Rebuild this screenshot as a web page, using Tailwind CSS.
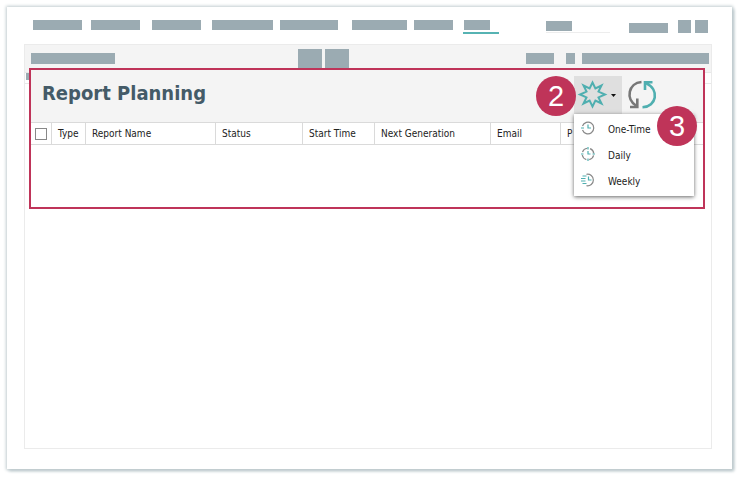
<!DOCTYPE html>
<html lang="en">
<head>
<meta charset="utf-8">
<title>Report Planning</title>
<script src="https://cdn.jsdelivr.net/npm/@tailwindcss/browser@4"></script>
</head>
<body class="bg-white font-['DejaVu_Sans_Condensed','DejaVu_Sans',sans-serif] text-[10px] text-[#222]">
<div class="flex h-screen min-h-[300px] pt-[7px] pr-[10px] pb-[10px] pl-[7px]">
  <div class="flex grow flex-col bg-white pr-5 pb-5 pl-[17px] shadow-[0_0_3px_1px_#c3ced1,2px_2px_3px_#b5c3c7]">
    <!-- Navigation placeholders -->
    <nav class="flex h-[37px] items-start pt-[13px] pr-1 pl-[9px]">
      <div class="flex">
        <span class="h-[10px] w-[49px] bg-[#9babb2]"></span>
        <span class="ml-[9px] h-[10px] w-[49px] bg-[#9babb2]"></span>
        <span class="ml-3 h-[10px] w-[49px] bg-[#9babb2]"></span>
        <span class="ml-[11px] h-[10px] w-[61px] bg-[#9babb2]"></span>
        <span class="ml-[7px] h-[10px] w-[58px] bg-[#9babb2]"></span>
        <span class="ml-[14px] h-[10px] w-[55px] bg-[#9babb2]"></span>
        <span class="ml-[7px] h-[10px] w-[39px] bg-[#9babb2]"></span>
        <span class="ml-[10px] flex h-[14px] w-9 border-b-2 border-[#56b3b3]"><span class="ml-px h-[10px] w-[26px] bg-[#9babb2]"></span></span>
      </div>
      <div class="ml-auto flex items-end">
        <span class="flex h-3 w-16 border-b border-[#ededed]"><span class="h-[10px] w-[26px] bg-[#9babb2]"></span></span>
        <span class="ml-[19px] h-[10px] w-[39px] bg-[#9babb2]"></span>
        <span class="ml-[10px] h-[13px] w-[13px] bg-[#9babb2]"></span>
        <span class="ml-1 h-[13px] w-[13px] bg-[#9babb2]"></span>
      </div>
    </nav>
    <div class="grow border border-[#ebebeb]">
      <!-- Toolbar placeholders -->
      <div class="flex h-[23px] items-end bg-[#f4f4f4] pr-[2px] pl-[6px]">
        <span class="mb-1 h-[11px] w-[84px] bg-[#9babb2]"></span>
        <span class="ml-[183px] h-[19px] w-6 bg-[#9babb2]"></span>
        <span class="ml-[3px] h-[19px] w-6 bg-[#9babb2]"></span>
        <div class="mb-1 ml-auto flex">
          <span class="h-[11px] w-7 bg-[#9babb2]"></span>
          <span class="ml-3 h-[11px] w-[9px] bg-[#9babb2]"></span>
          <span class="ml-[7px] h-[11px] w-[127px] bg-[#9babb2]"></span>
        </div>
      </div>
      <div class="relative pr-[6px] pl-1">
        <div class="absolute inset-x-0 top-0 flex h-4 flex-col border-b border-[#e8e8e8]">
          <div class="h-[5px] border-b border-[#e8e8e8] bg-[#f4f4f4]"></div>
          <div class="ml-px h-[7px] w-[3px] bg-[#9babb2]"></div>
        </div>
        <section class="relative min-h-[141px] border-2 border-[#bf3459] bg-white">
          <header class="flex h-[52px] items-start bg-[#f4f4f4] pt-[6px] pr-[46px] pl-[11px]">
            <h1 class="pt-1 text-[20px] leading-[26px] font-bold text-[#445b68]">Report Planning</h1>
            <div class="relative ml-auto">
              <button type="button" aria-label="New report schedule" aria-haspopup="menu" class="flex h-[39px] w-12 items-start bg-[#dfdfdf] pt-[3px] pl-[3px]">
                <svg width="31" height="31" viewBox="0 0 31 31" fill="none" stroke="#4fafb0" stroke-width="2"><path d="M15.500 3.500 18.400 9.500 24.500 6.500 21.500 12.600 28 15.500 21.500 18.400 24.500 24.500 18.400 21.500 15.500 27.500 12.600 21.500 6.500 24.500 9.500 18.400 3 15.500 9.500 12.600 6.500 6.500 12.600 9.500Z"/></svg>
                <svg class="mt-[14px] ml-[3px]" width="5" height="4" viewBox="0 0 5 4"><path d="M0 1H5L2.500 4Z" fill="#111"/></svg>
              </button>
              <ul role="menu" class="absolute top-[38px] left-0 z-10 w-[120px] bg-white py-[2px] shadow-[0_1px_4px_#666]">
                <li role="none"><button role="menuitem" type="button" class="flex h-[26px] w-full items-center">
                  <svg class="mb-[2px] ml-[7px]" width="14" height="14" viewBox="0 0 14 14" fill="none" stroke-width="1.200"><path d="M1.500 5A5.800 5.800 0 1 1 1.500 9" stroke="#888"/><path d="M0 7H3M7 3.500V7H10" stroke="#4fafb0"/></svg>
                  <span class="ml-[13px]">One-Time</span></button></li>
                <li role="none"><button role="menuitem" type="button" class="flex h-[26px] w-full items-center">
                  <svg class="mb-[2px] ml-[7px]" width="14" height="14" viewBox="0 0 14 14" fill="none" stroke-width="1.200"><circle cx="7" cy="7" r="5.800" stroke="#888" stroke-dasharray="6.100 3" stroke-dashoffset="-1.500"/><path d="M7 0V2.500M7 11.500V14M0 7H2.500M11.500 7H14M7 4V7H9.500" stroke="#4fafb0"/></svg>
                  <span class="ml-[13px]">Daily</span></button></li>
                <li role="none"><button role="menuitem" type="button" class="flex h-[26px] w-full items-center">
                  <svg class="mb-[2px] ml-[7px]" width="14" height="14" viewBox="0 0 14 14" fill="none" stroke-width="1.200"><path d="M5.500 1.300A5.800 5.800 0 1 1 5.500 12.700" stroke="#888"/><path d="M1.500 3H5.500M0 5.500H4.500M0 8H4.500M1.500 10.500H5.500M7.500 3.500V7H10.500" stroke="#4fafb0"/></svg>
                  <span class="ml-[13px]">Weekly</span></button></li>
              </ul>
              <span class="absolute top-0 right-full mr-[-2px] flex size-10 items-center justify-center rounded-full bg-[#bf3459] font-['Liberation_Sans',sans-serif] text-[29px] leading-none text-white">2</span>
            </div>
            <button type="button" aria-label="Refresh" class="relative ml-[5px] pt-[3px]">
              <svg width="31" height="31" viewBox="0 0 31 31" fill="none" stroke-width="2.600"><path d="M14.500 3C1.500 4 -2 20 9.500 27" stroke="#777"/><path d="M3 28H10.300V19.500" stroke="#777"/><path d="M15.500 28.300C29.500 27.500 33 11 19 4" stroke="#4fafb0"/><path d="M25.500 3.200H18V11" stroke="#4fafb0"/></svg>
            </button>
            <span class="relative z-20 mt-[30px] -mr-[40px] -ml-px flex size-10 shrink-0 items-center justify-center rounded-full bg-[#bf3459] font-['Liberation_Sans',sans-serif] text-[29px] leading-none text-white">3</span>
          </header>
          <table class="w-full table-fixed border-separate border-spacing-0">
            <thead>
              <tr class="h-[23px] text-left *:border-y *:border-r *:border-[#dadada] *:p-0 *:pl-[6px] *:font-normal *:last:border-r-0">
                <th class="w-[21px]"><input type="checkbox" aria-label="Select all" class="-ml-[2px] block size-3 appearance-none border border-[#888] bg-white"></th>
                <th class="w-[34px]">Type</th>
                <th class="w-[130px]">Report Name</th>
                <th class="w-[87px]">Status</th>
                <th class="w-[72px]">Start Time</th>
                <th class="w-[116px]">Next Generation</th>
                <th class="w-[70px]">Email</th>
                <th>P</th>
              </tr>
            </thead>
          </table>
        </section>
      </div>
    </div>
  </div>
</div>
</body>
</html>
